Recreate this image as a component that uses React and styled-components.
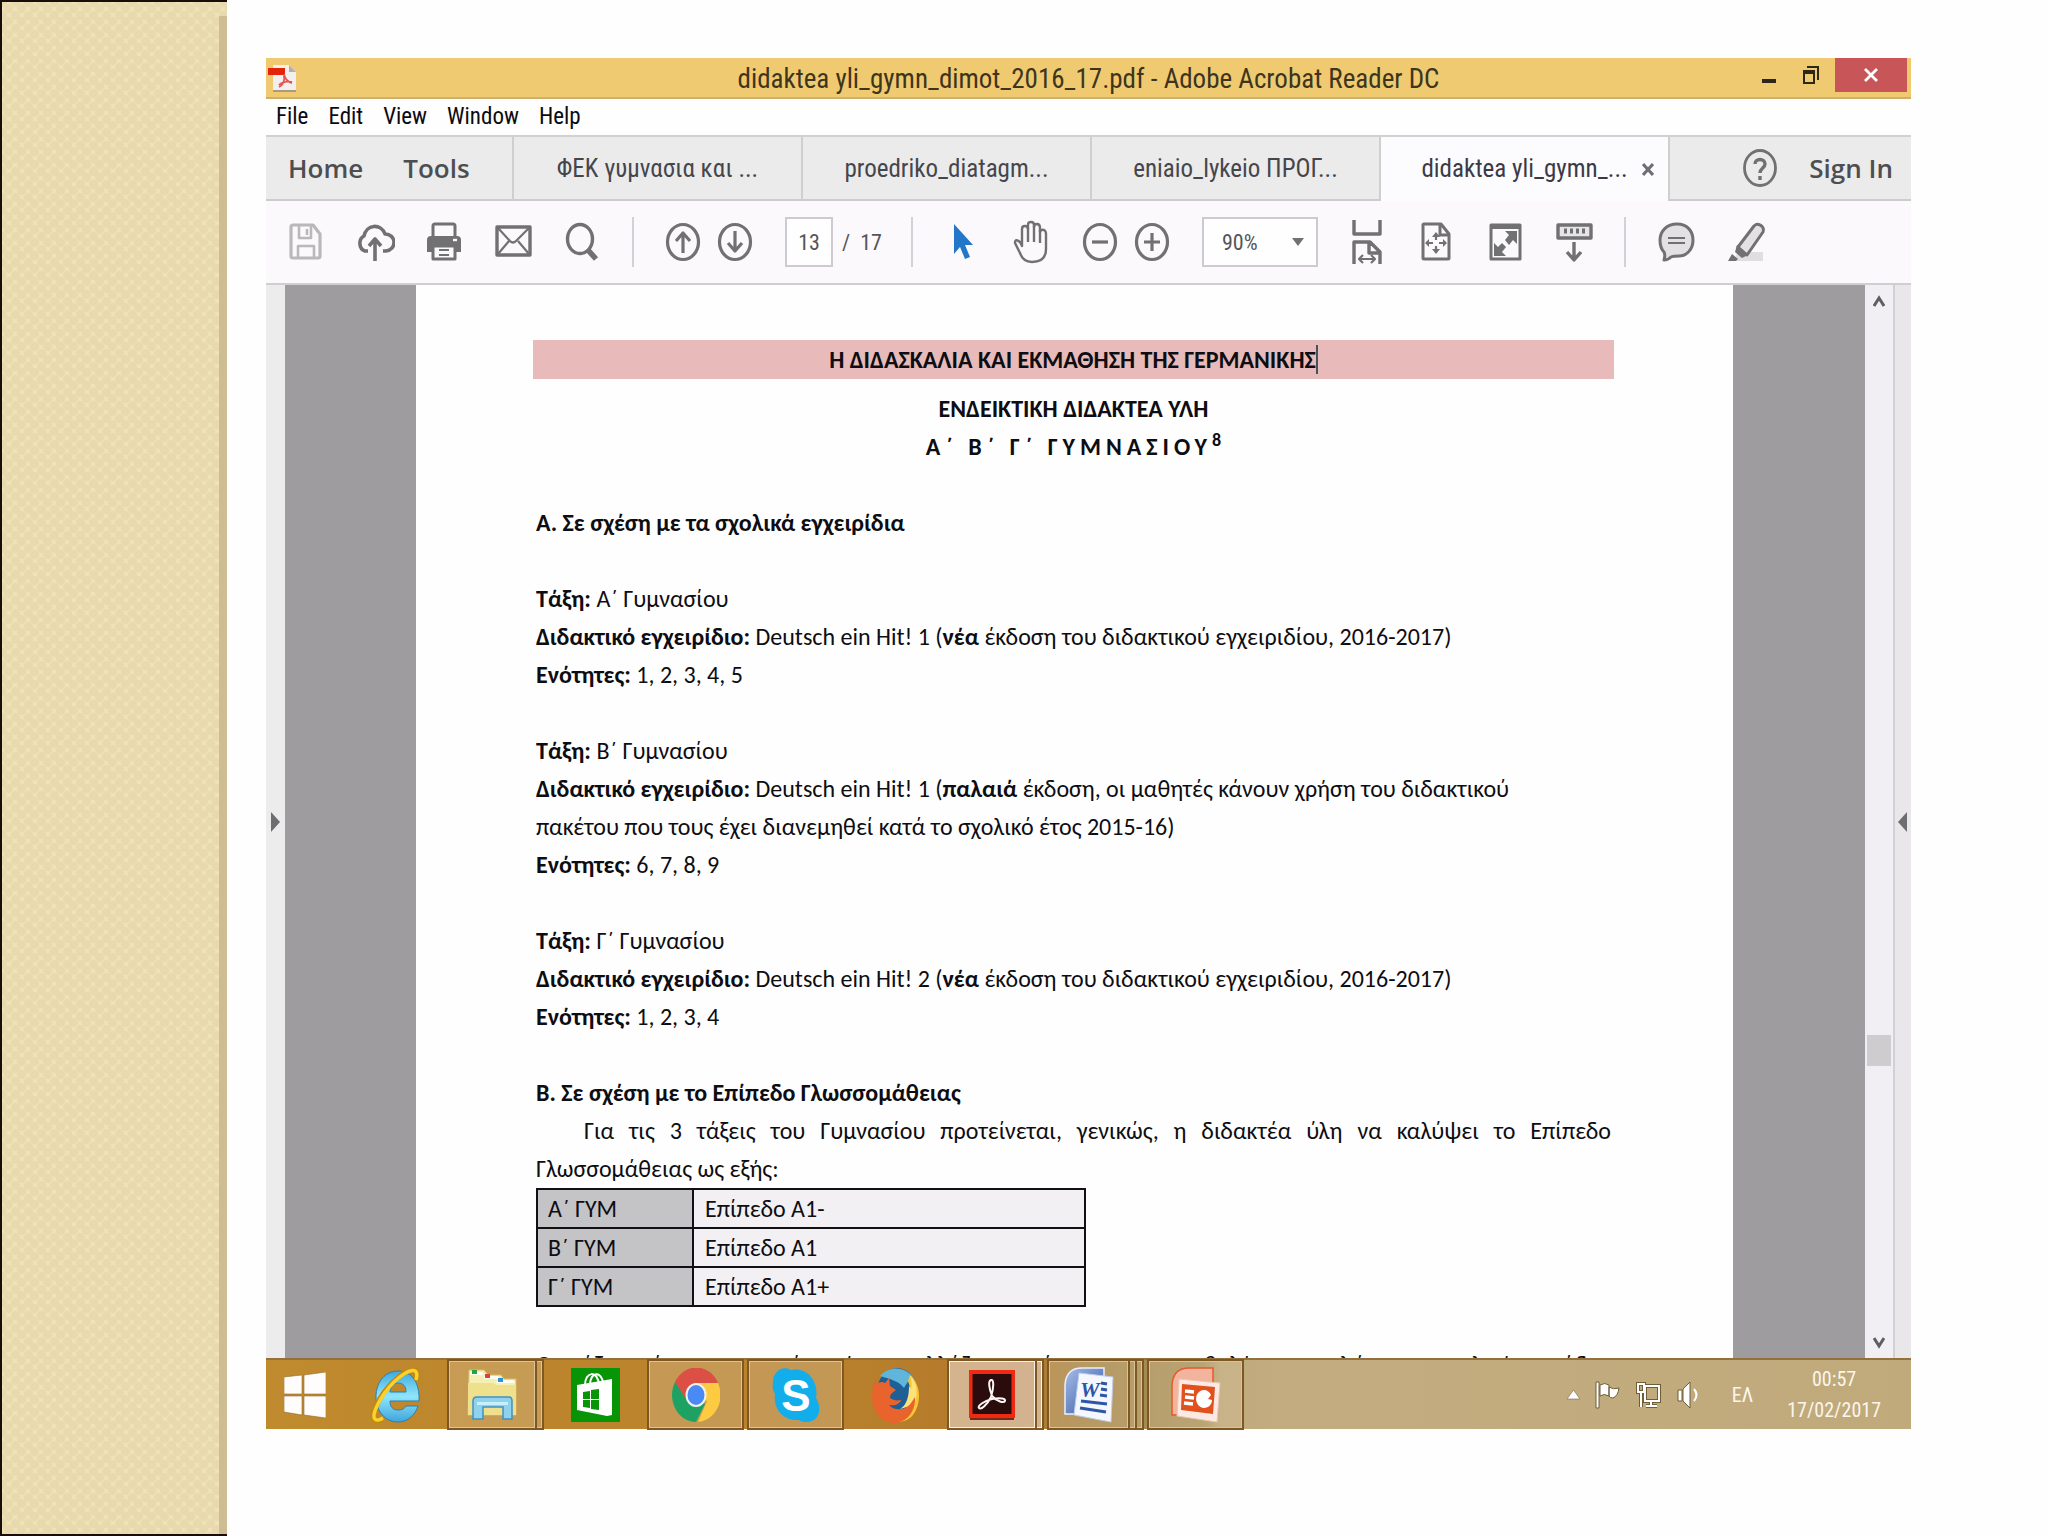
import React from 'react';
import styled, { createGlobalStyle, css } from 'styled-components';

const uiFont = "'Roboto Condensed', 'Open Sans', 'Noto Sans', sans-serif";
const headFont = "'Open Sans', 'Noto Sans', sans-serif";
const docFont = "Carlito, 'Noto Sans', 'Open Sans', sans-serif";

const GlobalStyle = createGlobalStyle`
  * {
    box-sizing: border-box;
  }
  body {
    margin: 0;
    background: #fefefe;
    font-family: ${uiFont};
  }
  button,
  input,
  select {
    margin: 0;
    padding: 0;
    border: 0;
    background: none;
    color: inherit;
    font: inherit;
  }
  svg {
    display: block;
    flex: none;
  }
`;

/* ---------- slide ---------- */

const Slide = styled.div`
  display: grid;
  grid-template-columns: 227px minmax(0, 1fr);
  height: 100vh;
`;

const Ribbon = styled.aside`
  display: flex;
  justify-content: flex-end;
  padding-top: 14px;
  border: 2px solid #170d0b;
  border-right: 0;
  background-color: #f0e2b7;
  background-image: radial-gradient(circle, #e8daae 4px, transparent 5px),
    radial-gradient(circle, #e8daae 4px, transparent 5px);
  background-size: 13px 13px;
  background-position: 0 0, 7px 7px;
`;

const RibbonEdge = styled.div`
  width: 8px;
  background: #cdbc94;
`;

const Stage = styled.main`
  display: flex;
  min-height: 0;
  padding: 58px 137px 107px 39px;
`;

const Window = styled.div`
  display: flex;
  flex: 1;
  flex-direction: column;
  min-width: 0;
`;

/* ---------- title bar and menus ---------- */

const TitleBar = styled.header`
  display: grid;
  flex: none;
  grid-template-columns: 1fr auto 1fr;
  height: 41px;
  border-bottom: 2px solid #cfae70;
  background: #f0ca71;
`;

const AppIcon = styled.div`
  padding: 5px 2px;
`;

const Title = styled.h1`
  margin: 0;
  color: #3d351c;
  font-size: 27px;
  font-weight: 400;
  line-height: 43px;
  white-space: nowrap;
`;

const Controls = styled.div`
  display: flex;
  justify-content: flex-end;
  padding-right: 4px;
`;

const ControlButton = styled.button`
  display: flex;
  align-items: center;
  justify-content: center;
  width: ${(p) => (p.$close ? '72px' : '42px')};
  height: 34px;
  margin-left: ${(p) => (p.$close ? '3px' : '0')};
  background: ${(p) => (p.$close ? '#c85557' : 'transparent')};
`;

const MenuBar = styled.nav`
  display: flex;
  flex: none;
  gap: 20px;
  height: 36px;
  padding-left: 10px;
  background: #fdfefd;
`;

const MenuItem = styled.button`
  color: #0c0a10;
  font-size: 23px;
  line-height: 36px;
`;

/* ---------- tabs ---------- */

const TabBar = styled.div`
  display: flex;
  flex: none;
  height: 66px;
  border-top: 2px solid #d0d1d1;
  background: #ebebeb;
`;

const barBottom = css`
  border-bottom: 2px solid #cccccd;
`;

const MainLinks = styled.div`
  display: flex;
  gap: 40px;
  width: 246px;
  padding-left: 22px;
  ${barBottom}
`;

const BarButton = styled.button`
  color: #4d4e52;
  font-family: ${headFont};
  font-size: 26px;
  font-weight: 600;
  line-height: 62px;
  white-space: nowrap;
`;

const Tab = styled.div`
  display: grid;
  grid-template-columns: 1fr auto 1fr;
  width: 289px;
  border-left: 2px solid #cfcfd0;
  background: ${(p) => (p.$active ? '#fcfbfd' : 'transparent')};
  ${(p) => !p.$active && barBottom}
`;

const TabLabel = styled.button`
  grid-column: 2;
  color: ${(p) => (p.$active ? '#3a3a46' : '#45464b')};
  font-size: 25px;
  line-height: 64px;
  white-space: nowrap;
`;

const TabClose = styled.button`
  display: flex;
  align-items: center;
  justify-content: center;
`;

const Account = styled.div`
  display: flex;
  flex: 1;
  gap: 31px;
  align-items: center;
  justify-content: flex-end;
  padding-right: 18px;
  border-left: 2px solid #cfcfd0;
  ${barBottom}
`;

/* ---------- toolbar ---------- */

const Toolbar = styled.div`
  display: flex;
  flex: none;
  align-items: center;
  height: 84px;
  padding-left: 5px;
  border-bottom: 2px solid #d0ced1;
  background: #fbf9fc;
  color: #717073;
`;

const Group = styled.div`
  display: flex;
  margin: ${(p) => (p.$tight ? '0 24px 0 8px' : '0')};
`;

const ToolButton = styled.button`
  display: flex;
  align-items: center;
  justify-content: center;
  width: ${(p) => (p.$tight ? '52px' : '69px')};
  height: 50px;
`;

const Divider = styled.span`
  width: 2px;
  height: 50px;
  margin: 0 15px 0 16px;
  background: #d3d1d5;
`;

const PageField = styled.label`
  display: flex;
  align-items: center;
  width: 110px;
  color: #55555b;
  font-size: 22px;
  white-space: pre;
`;

const PageInput = styled.input`
  width: 48px;
  height: 50px;
  margin-right: 9px;
  border: 2px solid #cdcbd0;
  background: #fefefe;
  text-align: center;
`;

const ZoomBox = styled.label`
  display: flex;
  align-items: center;
  width: 116px;
  height: 50px;
  margin-right: 14px;
  padding: 0 12px 0 18px;
  border: 2px solid #cdcbd0;
  background: #fefefe;
`;

const ZoomSelect = styled.select`
  flex: 1;
  min-width: 0;
  appearance: none;
  color: #55555b;
  font-size: 22px;
`;

/* ---------- document view ---------- */

const Viewer = styled.div`
  display: flex;
  flex: 1;
  min-height: 0;
  background: #9e9c9e;
`;

const PaneToggle = styled.button`
  display: flex;
  flex: none;
  align-items: center;
  justify-content: ${(p) => (p.$right ? 'flex-end' : 'flex-start')};
  width: ${(p) => (p.$right ? '18px' : '19px')};
  padding: 0 4px;
  border-left: ${(p) => (p.$right ? '2px solid #d2d0d4' : '0')};
  background: ${(p) => (p.$right ? '#e9e7ea' : '#ebeceb')};
`;

const Page = styled.article`
  flex: 1;
  min-width: 0;
  margin: 0 132px 0 131px;
  padding: 55px 122px 0 120px;
  overflow: hidden;
  background: #fefefe;
  color: #0d0d12;
  font-family: ${docFont};
  font-size: 24px;
  line-height: 38px;
`;

const Banner = styled.h2`
  margin: 0 -3px 11px;
  background: #e8bbba;
  font-size: 24px;
  line-height: 39px;
  text-align: center;
`;

const Caret = styled.span`
  border-right: 2px solid #44525a;
`;

const Heading = styled.h3`
  margin: 0;
  font-size: 24px;
  text-align: ${(p) => (p.$center ? 'center' : 'left')};
`;

const Spaced = styled.span`
  letter-spacing: 5px;
  white-space: pre;
`;

const Sup = styled.sup`
  font-size: 18px;
  line-height: 0;
`;

const Paragraph = styled.p`
  margin: 38px 0;
  white-space: nowrap;
`;

const Line = styled.span`
  display: block;
  padding-left: ${(p) => (p.$indent ? '48px' : '0')};
  text-align-last: ${(p) => (p.$justify ? 'justify' : 'left')};
  white-space: nowrap;
`;

const Levels = styled.table`
  width: 550px;
  margin-bottom: 39px;
  border-collapse: collapse;
  line-height: 37px;
`;

const Level = styled.th`
  width: 156px;
  padding: 0 10px;
  border: 2px solid #111014;
  background: #c4c3c5;
  font-weight: 400;
  text-align: left;
`;

const LevelValue = styled.td`
  padding: 0 11px;
  border: 2px solid #111014;
  background: #f2f0f3;
`;

const ScrollBar = styled.div`
  display: flex;
  flex: none;
  flex-direction: column;
  align-items: center;
  width: 28px;
  background: #f1eff3;
`;

const ScrollArrow = styled.button`
  display: flex;
  align-items: center;
  justify-content: center;
  width: 28px;
  height: 31px;
`;

const Track = styled.span`
  flex: ${(p) => p.$grow};
`;

const Thumb = styled.span`
  width: 24px;
  height: 31px;
  background: #cecccf;
`;

/* ---------- taskbar ---------- */

const TaskBar = styled.footer`
  display: flex;
  flex: none;
  gap: 5px;
  height: 71px;
  border-top: 2px solid #94703a;
  background: linear-gradient(
    90deg,
    #c08a2e 0%,
    #b8802c 35%,
    #b4782c 46%,
    #a5803f 49%,
    #a38a4f 53%,
    #a8945e 57%,
    #bfaa7c 58%,
    #c3ad80 62%,
    #c0aa7c 100%
  );
`;

const Task = styled.button`
  display: flex;
  width: ${(p) => (p.$start ? '77px' : '95px')};
`;

const frame = css`
  border: 2px solid ${(p) => (p.$active ? '#fdf0e2' : '#dcc393')};
  outline: 1px solid #7d5724;
  outline-offset: -1px;
  box-shadow: 0 0 0 1px #7d5724;
  background: ${(p) => (p.$active ? 'rgba(230, 214, 205, 0.62)' : 'rgba(215, 195, 155, 0.36)')};
`;

const TaskFace = styled.span`
  display: flex;
  flex: 1;
  align-items: center;
  justify-content: center;
  height: 69px;
  ${(p) => p.$open && frame}
`;

const TaskSliver = styled.span`
  width: 7px;
  height: 69px;
  ${frame}
  border-left: 0;
`;

const Tray = styled.div`
  display: flex;
  flex: 1;
  gap: 14px;
  align-items: center;
  justify-content: flex-end;
  padding-right: 30px;
  color: #fbf6ea;
  font-size: 20px;
`;

const TrayButton = styled.button`
  margin-left: ${(p) => (p.$apart ? '16px' : '0')};
`;

const Clock = styled.time`
  margin-left: 20px;
  line-height: 31px;
  text-align: center;
`;

/* ---------- icons ---------- */

const Glyph = ({ children, w = 40, h = 44, stroke = 3.6 }) => (
  <svg
    width={w}
    height={h}
    viewBox={`0 0 ${w} ${h}`}
    fill="none"
    stroke="#717073"
    strokeWidth={stroke}
    strokeLinejoin="round"
    aria-hidden="true"
  >
    {children}
  </svg>
);

const SaveIcon = () => (
  <Glyph stroke={3.2}>
    <g stroke="#b9b8ba">
      <path d="M7 5h20l7 9v22q0 2-2 2H7q-2 0-2-2V7q0-2 2-2z" />
      <path d="M13 5v13h12V5M21 9v6M12 38V26h16v12" strokeWidth="2.6" />
    </g>
  </Glyph>
);

const CloudIcon = () => (
  <Glyph>
    <path d="M13 31H10a7 8 0 0 1-1-15 11 12 0 0 1 21-2 8.5 8.5 0 0 1 1 17h-3" />
    <path d="M20 41V19M14 26l6-7 6 7" />
  </Glyph>
);

const PrintIcon = () => (
  <Glyph stroke={3}>
    <path d="M9 17V6q0-2 2-2h18q2 0 2 2v11" />
    <path d="M3 20q0-4 4-4h26q4 0 4 4v12H3z" fill="#717073" stroke="none" />
    <path d="M9 26h22v13H9z" fill="#fbf9fc" />
    <path d="M15 30h10M15 35h10" strokeWidth="2.2" />
    <path d="M29 20h4" stroke="#fbf9fc" strokeWidth="2.4" />
  </Glyph>
);

const MailIcon = () => (
  <Glyph stroke={3.4}>
    <path d="M4 7h33v28H4z" />
    <path d="M5 8l12 13q3 3 6 0L36 8M5 34l11-13M36 34L25 21" strokeWidth="2.2" />
  </Glyph>
);

const SearchIcon = () => (
  <Glyph stroke={3.4}>
    <ellipse cx="18" cy="19" rx="12.5" ry="14.5" />
    <path d="M26 30l8 9" strokeWidth="5.5" />
  </Glyph>
);

const Ring = ({ d }) => (
  <Glyph stroke={3.2}>
    <ellipse cx="20" cy="22" rx="15.5" ry="17.5" />
    <path d={d} />
  </Glyph>
);

const CursorIcon = () => (
  <Glyph>
    <path d="M11 4l19 21h-8l5 12-5 2-5-12-6 7z" fill="#2277c8" stroke="none" />
  </Glyph>
);

const HandIcon = () => (
  <Glyph stroke={2.4}>
    <path d="M10 26V9q0-3 3-3t3 3V5q0-3 3-3t3 3v2q0-3 3-3t3 4v4q1-3 4-2 2 1 2 4v15q0 13-14 13-9 0-12-9l-5-10q0-5 5-1z" />
    <path d="M16 8v14M22 6v16M28 10v13" />
  </Glyph>
);

const FitWidthIcon = () => (
  <Glyph stroke={3.4}>
    <path d="M7 0v14h26V0" />
    <path d="M7 44V22h16l10 10v12M22 22v11h11" />
    <path d="M12 39h16M16 35l-4 4 4 4M24 35l4 4-4 4" strokeWidth="2.2" />
  </Glyph>
);

const FitPageIcon = () => (
  <Glyph stroke={3}>
    <path d="M8 4h17l8 10v24q0 1-1 1H8q-1 0-1-1V5q0-1 1-1zM24 4v11h9" />
    <path d="M20 14v6M20 26v6M11 23h6M23 23h6" strokeWidth="2.2" />
    <path d="M16 17l4-5 4 5zM16 29l4 5 4-5zM13 19l-4 4 4 4zM27 19l4 4-4 4z" fill="#717073" stroke="none" />
  </Glyph>
);

const FullScreenIcon = () => (
  <Glyph stroke={3}>
    <path d="M6 5h29v34H6z" />
    <path d="M6 7h29" strokeWidth="4" />
    <path d="M20 11h12v13l-4-4-4 5-4-5 4-5zM9 36V23l4 4 4-4 4 4-4 5 4 4z" fill="#717073" stroke="none" />
  </Glyph>
);

const KeyboardIcon = () => (
  <Glyph stroke={3.4}>
    <path d="M4 5h33v13H4z" fill="#e7e5e8" />
    <path d="M10 11h3M16 11h3M22 11h3M28 11h3" strokeWidth="5" />
    <path d="M20 22v18M13 32l7 8 7-8" />
  </Glyph>
);

const CommentIcon = () => (
  <Glyph stroke={3}>
    <path d="M21 4c10 0 16 7 16 16s-6 16-14 16c-4 0-6 0-8 1-2 2-4 3-7 3 1-3 1-6 0-8-3-3-4-8-4-12C4 11 11 4 21 4z" fill="#e3e1e4" />
    <path d="M12 18h17M12 23h17" strokeWidth="2.2" />
  </Glyph>
);

const PenIcon = () => (
  <Glyph stroke={3}>
    <path d="M12 32h26v9H10z" fill="#e0dee1" stroke="none" />
    <path d="M35 5c3 1 4 4 3 7L22 35l-9-8L29 6q3-3 6-1z" fill="#e3e1e4" />
    <path d="M12 25l11 10-6 3-7-6zM7 34l6 5-2 2H3z" fill="#717073" stroke="none" />
  </Glyph>
);

const PdfIcon = () => (
  <svg width="28" height="30" viewBox="0 0 28 30" aria-hidden="true">
    <path d="M5 2h16l7 7v19H5z" fill="#f2efee" />
    <path d="M5 27h23v2H5z" fill="#aa9a80" />
    <path d="M21 2v7h7z" fill="#b5afaa" />
    <path d="M0 5h17v7H0z" fill="#e42409" />
    <path d="M16 11c1 5 3 8 8 9M11 24c4-2 6-6 5-12M11 22c4-4 8-4 13-3" stroke="#e45757" strokeWidth="1.8" fill="none" />
  </svg>
);

const WindowsLogo = () => (
  <svg width="42" height="46" viewBox="0 0 42 46" fill="#fefdfb" stroke="#946b2b" strokeWidth="0.6" aria-hidden="true">
    <path d="M0 5l18-2v19H0zM20 3l22-3v22H20zM0 24h18v19L0 40zM20 24h22v22l-22-3z" />
  </svg>
);

const IeIcon = () => (
  <svg width="50" height="56" viewBox="0 0 50 56" fill="none" aria-hidden="true">
    <defs>
      <linearGradient id="ie" x1="0" y1="0" x2="0" y2="1">
        <stop offset="0" stopColor="#3fa9dd" />
        <stop offset="0.5" stopColor="#8fe6fb" />
        <stop offset="1" stopColor="#3fa5dc" />
      </linearGradient>
    </defs>
    <path
      d="M48 34H19c0 6 3 9 8 9 4 0 6-1 8-4h12c-3 10-11 16-20 16C14 55 5 44 5 30 5 15 14 4 27 4c14 0 22 12 21 30zM19 25h16c0-6-3-9-8-9-4 0-7 3-8 9z"
      fill="url(#ie)"
      stroke="#2e7eae"
    />
    <path d="M45 14C50-2 38 0 23 14 7 29-1 49 4 53c2 2 5 1 8-1" stroke="#c28a0a" strokeWidth="5" />
    <path d="M45 13C49-1 38 1 23 15 8 30 0 49 4 52c2 2 5 1 8-1" stroke="#fbd22c" strokeWidth="3.4" />
  </svg>
);

const ExplorerIcon = () => (
  <svg width="52" height="52" viewBox="0 0 52 52" aria-hidden="true">
    <path d="M3 1h15l4 5h13l3 4h12v36H2z" fill="#f6efb4" stroke="#d8bd62" />
    <path d="M4 3h12l2 3H4zM18 7h14l2 3H18zM32 11h15l2 3H30z" fill="#fffef0" />
    <path d="M6 1h5v4H6z" fill="#22a63c" />
    <path d="M19 5h5v4h-5z" fill="#dc4234" />
    <path d="M32 9h5v4h-5z" fill="#2b93d6" />
    <path d="M2 14h25l3 2h20v30H2z" fill="#efe08d" />
    <path d="M7 50V32q0-4 4-4h32q3 0 3 4v18h-9V38H17v12z" fill="#8fd2ee" stroke="#3f92c0" strokeWidth="1.5" />
    <path d="M11 33h31v3H11z" fill="#c8f0fb" />
  </svg>
);

const StoreIcon = () => (
  <svg width="49" height="54" viewBox="0 0 49 54" aria-hidden="true">
    <path d="M0 0h49v54H0z" fill="#079407" />
    <path d="M14 17c0-14 13-15 14 0M19 17c0-14 12-14 13-2" fill="none" stroke="#fff" strokeWidth="2" />
    <path d="M6 17l35-6v36l-5 1L6 42z" fill="#fff" />
    <path d="M12 24l7-1v8h-7zM20 22l8-1v10h-8zM12 32h7v8l-7-1zM20 32h8v10l-8-1z" fill="#079407" />
  </svg>
);

const ChromeIcon = () => (
  <svg width="48" height="54" viewBox="0 0 48 54" preserveAspectRatio="none" aria-hidden="true">
    <path d="M24 27L24 15h22a24 27 0 0 1-20 39L35 33z" fill="#fdcb42" />
    <path d="M24 27L3 14a24 27 0 0 0 21 40l9-18z" fill="#1ea264" />
    <path d="M3 14a24 27 0 0 1 43 1H24L14 31z" fill="#dc4f45" />
    <ellipse cx="24" cy="27" rx="10.5" ry="12" fill="#f3f1ee" />
    <ellipse cx="24" cy="27" rx="8.5" ry="10" fill="#4a8af4" />
  </svg>
);

const SkypeIcon = () => (
  <svg width="50" height="56" viewBox="0 0 50 56" aria-hidden="true">
    <path d="M2 15C2 5 11-2 20 3c17-3 28 12 25 28 6 9 4 23-8 24-4 0-6 0-9-2C13 54 2 43 4 27 2 23 1 20 2 15z" fill="#12aeec" />
    <text x="25" y="44" textAnchor="middle" fill="#fff" fontFamily="'Liberation Sans', sans-serif" fontSize="44" fontWeight="700">
      S
    </text>
  </svg>
);

const FirefoxIcon = () => (
  <svg width="50" height="56" viewBox="0 0 50 56" aria-hidden="true">
    <ellipse cx="26" cy="25" rx="20" ry="24" fill="#1f5f98" />
    <path d="M9 9C18-2 36-1 43 12c-4-1-7 4-10 9-4-6-13-9-24-12z" fill="#5fb5da" />
    <path d="M39 8c12 10 12 32 0 43-8 6-20 5-28-1l14-2c15-2 18-18 12-34z" fill="#f7c532" />
    <path d="M39 8c2 6 2 10 1 14l-2-3c0 10-2 19-9 23l14-4c4-9 4-22-4-30z" fill="#fbe27a" />
    <path d="M5 12l1 5c2-2 5-3 8-1l4-5 1 8 6 4c-4 3-6 4-6 8 3 2 6 3 11 2-1 4-6 6-12 5 6 7 17 5 22-2l4-6c1 14-8 26-21 26C5 56-5 33 5 12z" fill="#e8642c" />
  </svg>
);

const AcrobatIcon = () => (
  <svg width="46" height="50" viewBox="0 0 46 50" aria-hidden="true">
    <path d="M1 2h44v48H1z" fill="#7a2b18" />
    <path d="M0 0h46v48H0z" fill="#ee2a12" />
    <path d="M3.500 4h39v40h-39z" fill="#2b0c0c" />
    <path d="M23 26c-3-8-4-15-1-16s3 7 0 17c-4 8-10 13-12 11s5-7 13-9c9-2 14 0 13 2s-8 1-13-5" fill="none" stroke="#fdf6f4" strokeWidth="2" />
  </svg>
);

const WordIcon = () => (
  <svg width="50" height="56" viewBox="0 0 50 56" aria-hidden="true">
    <defs>
      <linearGradient id="word" x1="0" y1="0" x2="1" y2="1">
        <stop offset="0" stopColor="#a8bfe8" />
        <stop offset="1" stopColor="#2d52a4" />
      </linearGradient>
    </defs>
    <path d="M1 47V18Q2 1 18 1h22v46z" fill="url(#word)" stroke="#eaf0fb" strokeWidth="1.5" />
    <path d="M15 6l34 4-2 45-37-7z" fill="#f4f7fd" stroke="#bfcdea" />
    <text x="16" y="30" fill="#2f56a6" fontFamily="'Liberation Serif', serif" fontSize="22" fontStyle="italic" fontWeight="700">
      W
    </text>
    <path d="M37 16l6 1M37 22l6 1M36 28l7 1M17 34l26 3M16 41l26 4" stroke="#2f56a6" strokeWidth="3" />
  </svg>
);

const PowerPointIcon = () => (
  <svg width="50" height="56" viewBox="0 0 50 56" aria-hidden="true">
    <path d="M1 48V18Q2 1 18 1h24v46z" fill="#f2b49c" stroke="#e5592b" strokeWidth="1.5" />
    <path d="M8 12l41 4-3 39-40-6z" fill="#fbeae4" stroke="#eec4b4" />
    <path d="M11 17l33 3-2 27-32-4z" fill="#e2501d" />
    <path d="M14 24l9 1M14 30l9 1M13 36l9 1" stroke="#fff" strokeWidth="3.4" />
    <path d="M33 23c-11 1-10 17 0 18 5 0 8-4 8-8l-4-1 3-4c-1-3-4-5-7-5z" fill="#fff" />
  </svg>
);

const FlagIcon = () => (
  <svg width="27" height="28" viewBox="0 0 27 28" fill="#fff" stroke="#6f5d36" strokeWidth="1" aria-hidden="true">
    <path d="M2 1h3v26H2zM6 4q5-3 9 0v11q-5-3-9 0zM15 6q4 3 10 1-1 8-6 10-3 0-4-2z" />
  </svg>
);

const NetworkIcon = () => (
  <svg width="27" height="28" viewBox="0 0 27 28" fill="none" aria-hidden="true">
    <g stroke="#6f5d36" strokeWidth="4">
      <path d="M10 5h14v15H10zM16 20v5M11 25h11M3 3h6v8H3zM6 11v15" />
    </g>
    <g stroke="#fff" strokeWidth="2">
      <path d="M10 5h14v15H10zM16 20v5M11 25h11M3 3h6v8H3zM6 11v15" />
    </g>
  </svg>
);

const SpeakerIcon = () => (
  <svg width="26" height="28" viewBox="0 0 26 28" fill="#fff" stroke="#6f5d36" strokeWidth="1" aria-hidden="true">
    <path d="M2 9h4v11H2zM7 8l7-7v26l-7-7z" />
    <path d="M18 8q5 6 0 12" fill="none" stroke="#fff" strokeWidth="2" />
  </svg>
);

/* ---------- data ---------- */

const menus = ['File', 'Edit', 'View', 'Window', 'Help'];

const tabs = [
  { label: 'ΦΕΚ γυμνασια και ...' },
  { label: 'proedriko_diatagm...' },
  { label: 'eniaio_lykeio ΠΡΟΓ...' },
  { label: 'didaktea yli_gymn_...', active: true },
];

const fileTools = [
  ['Save', SaveIcon],
  ['Upload', CloudIcon],
  ['Print', PrintIcon],
  ['E-mail', MailIcon],
  ['Find', SearchIcon],
];

const viewTools = [
  ['Fit width', FitWidthIcon],
  ['Fit page', FitPageIcon],
  ['Full screen', FullScreenIcon],
  ['Read mode', KeyboardIcon],
];

const levels = [
  ['Α΄ ΓΥΜ', 'Επίπεδο Α1-'],
  ['Β΄ ΓΥΜ', 'Επίπεδο Α1'],
  ['Γ΄ ΓΥΜ', 'Επίπεδο Α1+'],
];

const tasks = [
  { name: 'Start', Icon: WindowsLogo, start: true },
  { name: 'Internet Explorer', Icon: IeIcon },
  { name: 'File Explorer', Icon: ExplorerIcon, open: true, stack: 1 },
  { name: 'Store', Icon: StoreIcon },
  { name: 'Chrome', Icon: ChromeIcon, open: true },
  { name: 'Skype', Icon: SkypeIcon, open: true },
  { name: 'Firefox', Icon: FirefoxIcon },
  { name: 'Acrobat Reader', Icon: AcrobatIcon, open: true, active: true, stack: 1 },
  { name: 'Word', Icon: WordIcon, open: true, stack: 2 },
  { name: 'PowerPoint', Icon: PowerPointIcon, open: true },
];

const Tools = ({ items }) => (
  <Group>
    {items.map(([name, Icon]) => (
      <ToolButton key={name} aria-label={name}>
        <Icon />
      </ToolButton>
    ))}
  </Group>
);

const AcrobatToolbar = () => (
  <Toolbar>
    <Tools items={fileTools} />
    <Divider />
    <Group $tight>
      <ToolButton $tight aria-label="Previous page">
        <Ring d="M20 33V13M13 21l7-8 7 8" />
      </ToolButton>
      <ToolButton $tight aria-label="Next page">
        <Ring d="M20 11v20M13 23l7 8 7-8" />
      </ToolButton>
    </Group>
    <PageField>
      <PageInput defaultValue="13" aria-label="Page number" />
      {'/  17'}
    </PageField>
    <Divider />
    <Tools items={[['Select', CursorIcon], ['Pan', HandIcon]]} />
    <Group $tight>
      <ToolButton $tight aria-label="Zoom out">
        <Ring d="M12 22h16" />
      </ToolButton>
      <ToolButton $tight aria-label="Zoom in">
        <Ring d="M12 22h16M20 13v18" />
      </ToolButton>
    </Group>
    <ZoomBox>
      <ZoomSelect aria-label="Zoom level" defaultValue="90%">
        <option>90%</option>
        <option>100%</option>
      </ZoomSelect>
      <svg width="12" height="8" viewBox="0 0 12 8" aria-hidden="true">
        <path d="M0 0h12L6 8z" fill="#717073" />
      </svg>
    </ZoomBox>
    <Tools items={viewTools} />
    <Divider />
    <Tools items={[['Comment', CommentIcon], ['Highlight', PenIcon]]} />
  </Toolbar>
);

const DocumentPage = () => (
  <Page>
    <Banner>
      <Caret>Η ΔΙΔΑΣΚΑΛΙΑ ΚΑΙ ΕΚΜΑΘΗΣΗ ΤΗΣ ΓΕΡΜΑΝΙΚΗΣ</Caret>
    </Banner>
    <Heading $center>ΕΝΔΕΙΚΤΙΚΗ ΔΙΔΑΚΤΕΑ ΥΛΗ</Heading>
    <Heading $center>
      <Spaced>Α΄ Β΄ Γ΄ ΓΥΜΝΑΣΙΟΥ</Spaced>
      <Sup>8</Sup>
    </Heading>
    <Paragraph>
      <b>Α. Σε σχέση με τα σχολικά εγχειρίδια</b>
    </Paragraph>
    <Paragraph>
      <b>Τάξη:</b> Α΄ Γυμνασίου
      <br />
      <b>Διδακτικό εγχειρίδιο:</b> Deutsch ein Hit! 1 (<b>νέα</b> έκδοση του διδακτικού εγχειριδίου, 2016-2017)
      <br />
      <b>Ενότητες:</b> 1, 2, 3, 4, 5
    </Paragraph>
    <Paragraph>
      <b>Τάξη:</b> Β΄ Γυμνασίου
      <br />
      <b>Διδακτικό εγχειρίδιο:</b> Deutsch ein Hit! 1 (<b>παλαιά</b> έκδοση, οι μαθητές κάνουν χρήση του διδακτικού
      <br />
      πακέτου που τους έχει διανεμηθεί κατά το σχολικό έτος 2015-16)
      <br />
      <b>Ενότητες:</b> 6, 7, 8, 9
    </Paragraph>
    <Paragraph>
      <b>Τάξη:</b> Γ΄ Γυμνασίου
      <br />
      <b>Διδακτικό εγχειρίδιο:</b> Deutsch ein Hit! 2 (<b>νέα</b> έκδοση του διδακτικού εγχειριδίου, 2016-2017)
      <br />
      <b>Ενότητες:</b> 1, 2, 3, 4
    </Paragraph>
    <Heading>Β. Σε σχέση με το Επίπεδο Γλωσσομάθειας</Heading>
    <Line $indent $justify>
      Για τις 3 τάξεις του Γυμνασίου προτείνεται, γενικώς, η διδακτέα ύλη να καλύψει το Επίπεδο
    </Line>
    <Line>Γλωσσομάθειας ως εξής:</Line>
    <Levels>
      <tbody>
        {levels.map(([grade, level]) => (
          <tr key={grade}>
            <Level scope="row">{grade}</Level>
            <LevelValue>{level}</LevelValue>
          </tr>
        ))}
      </tbody>
    </Levels>
    <Line $justify>Οι τάξεις είναι προς γνώση ή και αλλάζουν τρόπο με τη συμβολή των μελών της σχολικής ομάδας</Line>
  </Page>
);

const App = () => (
  <>
    <GlobalStyle />
    <Slide>
      <Ribbon>
        <RibbonEdge />
      </Ribbon>
      <Stage>
        <Window>
          <TitleBar>
            <AppIcon>
              <PdfIcon />
            </AppIcon>
            <Title>didaktea yli_gymn_dimot_2016_17.pdf - Adobe Acrobat Reader DC</Title>
            <Controls>
              <ControlButton aria-label="Minimize">
                <svg width="14" height="20" viewBox="0 0 14 20" aria-hidden="true">
                  <path d="M0 14h14v4H0z" fill="#2d2718" />
                </svg>
              </ControlButton>
              <ControlButton aria-label="Restore">
                <svg width="18" height="20" viewBox="0 0 18 20" fill="none" stroke="#2d2718" strokeWidth="2" aria-hidden="true">
                  <path d="M5 2h11v13" />
                  <path d="M2 7h10v11H2z" />
                  <path d="M1 7h12" strokeWidth="4" />
                </svg>
              </ControlButton>
              <ControlButton $close aria-label="Close">
                <svg width="14" height="14" viewBox="0 0 14 14" stroke="#fff" strokeWidth="2.8" aria-hidden="true">
                  <path d="M1 1l12 12M13 1L1 13" />
                </svg>
              </ControlButton>
            </Controls>
          </TitleBar>
          <MenuBar>
            {menus.map((name) => (
              <MenuItem key={name}>{name}</MenuItem>
            ))}
          </MenuBar>
          <TabBar>
            <MainLinks>
              <BarButton>Home</BarButton>
              <BarButton>Tools</BarButton>
            </MainLinks>
            {tabs.map(({ label, active }) => (
              <Tab key={label} $active={active}>
                <TabLabel $active={active}>{label}</TabLabel>
                {active && (
                  <TabClose aria-label="Close tab">
                    <svg width="12" height="13" viewBox="0 0 12 13" stroke="#6f6e72" strokeWidth="3" aria-hidden="true">
                      <path d="M1 1l10 11M11 1L1 12" />
                    </svg>
                  </TabClose>
                )}
              </Tab>
            ))}
            <Account>
              <button aria-label="Help">
                <svg width="36" height="40" viewBox="0 0 36 40" fill="none" stroke="#717073" aria-hidden="true">
                  <ellipse cx="18" cy="20" rx="15.500" ry="17.500" strokeWidth="2.8" />
                  <path d="M13 16c0-6 10-6 10 0 0 4-5 4-5 9M18 28v4" strokeWidth="3.4" />
                </svg>
              </button>
              <BarButton>Sign In</BarButton>
            </Account>
          </TabBar>
          <AcrobatToolbar />
          <Viewer>
            <PaneToggle aria-label="Show left pane">
              <svg width="10" height="20" viewBox="0 0 10 20" aria-hidden="true">
                <path d="M1 0l9 10-9 10z" fill="#6e6d6f" />
              </svg>
            </PaneToggle>
            <DocumentPage />
            <ScrollBar>
              <ScrollArrow aria-label="Scroll up">
                <svg width="12" height="12" viewBox="0 0 12 12" fill="none" stroke="#5f5e61" strokeWidth="3" aria-hidden="true">
                  <path d="M1 11l5-8 5 8" />
                </svg>
              </ScrollArrow>
              <Track $grow={11} />
              <Thumb />
              <Track $grow={4} />
              <ScrollArrow aria-label="Scroll down">
                <svg width="12" height="12" viewBox="0 0 12 12" fill="none" stroke="#5f5e61" strokeWidth="3" aria-hidden="true">
                  <path d="M1 1l5 8 5-8" />
                </svg>
              </ScrollArrow>
            </ScrollBar>
            <PaneToggle $right aria-label="Show right pane">
              <svg width="10" height="20" viewBox="0 0 10 20" aria-hidden="true">
                <path d="M10 0L1 10l9 10z" fill="#6e6d6f" />
              </svg>
            </PaneToggle>
          </Viewer>
          <TaskBar>
            {tasks.map(({ name, Icon, start, open, active, stack = 0 }) => (
              <Task key={name} $start={start} aria-label={name}>
                <TaskFace $open={open} $active={active}>
                  <Icon />
                </TaskFace>
                {Array.from({ length: stack }, (_, i) => (
                  <TaskSliver key={i} $active={active} />
                ))}
              </Task>
            ))}
            <Tray>
              <TrayButton aria-label="Show hidden icons">
                <svg width="13" height="10" viewBox="0 0 13 10" aria-hidden="true">
                  <path d="M0 9h13L6.500 0z" fill="#fff" stroke="#7a6a44" strokeWidth="0.6" />
                </svg>
              </TrayButton>
              <TrayButton aria-label="Action center">
                <FlagIcon />
              </TrayButton>
              <TrayButton aria-label="Network">
                <NetworkIcon />
              </TrayButton>
              <TrayButton aria-label="Volume">
                <SpeakerIcon />
              </TrayButton>
              <TrayButton $apart>ΕΛ</TrayButton>
              <Clock dateTime="2017-02-17T00:57">
                00:57
                <br />
                17/02/2017
              </Clock>
            </Tray>
          </TaskBar>
        </Window>
      </Stage>
    </Slide>
  </>
);

export default App;
